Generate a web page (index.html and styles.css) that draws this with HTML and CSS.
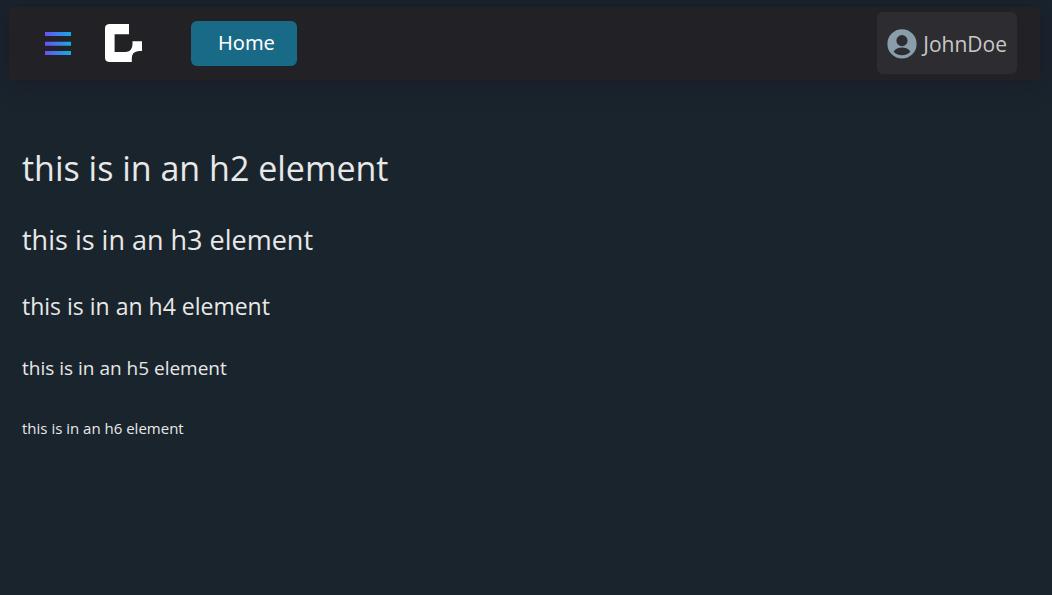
FILE: index.html
```
<!DOCTYPE html>
<html lang="en">
<head>
<meta charset="utf-8">
<meta name="viewport" content="width=device-width, initial-scale=1">
<title>Home</title>
<link rel="stylesheet" href="styles.css">
</head>
<body>
<header class="topbar">
  <button class="menu-button" type="button" aria-label="Menu">
    <svg width="27" height="24" viewBox="0 0 27 24" aria-hidden="true">
      <defs>
        <linearGradient id="bars" gradientUnits="userSpaceOnUse" x1="0" y1="0" x2="27" y2="0">
          <stop offset="0" stop-color="#6a50f5"/>
          <stop offset="1" stop-color="#10b0e0"/>
        </linearGradient>
      </defs>
      <path fill="url(#bars)" d="M0 1h26v4H0zM0 10.700h26v4H0zM0 20h26v4H0z"/>
    </svg>
  </button>
  <svg class="logo" width="38" height="38" viewBox="0 0 38 38" role="img" aria-label="Logo">
    <path fill="#fff" d="M4 0H24V10.300H9.600V28H21Q27.500 27 27.500 20V17.200H37V27H34Q26.800 27.500 26.800 34V38H4Q0 37.500 0 34V4Q0 .5 4 0Z"/>
  </svg>
  <nav class="nav"><a class="nav-link" href="#">Home</a></nav>
  <button class="user" type="button">
    <svg width="30" height="30" viewBox="0 0 30 30" aria-hidden="true">
      <path fill="#8a9dab" fill-rule="evenodd" d="M15 .3a14.600 14.600 0 1 0 0 29.200a14.600 14.600 0 1 0 0-29.200ZM15 6a5.600 5.600 0 1 1 0 11.200A5.600 5.600 0 1 1 15 6ZM6.600 22.400C9 19.500 12 18.600 15 18.600S21 19.500 23.400 22.400C21.500 24.900 18.500 26.200 15 26.200S8.500 24.900 6.600 22.400Z"/>
    </svg>
    <span>JohnDoe</span>
  </button>
</header>
<main class="content">
  <h2 class="heading heading-2">this is in an h2 element</h2>
  <h3 class="heading heading-3">this is in an h3 element</h3>
  <h4 class="heading heading-4">this is in an h4 element</h4>
  <h5 class="heading heading-5">this is in an h5 element</h5>
  <h6 class="heading heading-6">this is in an h6 element</h6>
</main>
</body>
</html>
```
FILE: styles.css
```
* { box-sizing: border-box; }

body {
  margin: 0;
  min-height: 100vh;
  background: #1a242d;
  color: #e8e8e8;
  font-family: "Segoe UI", "Open Sans", "Noto Sans", sans-serif;
}

.topbar {
  display: flex;
  align-items: center;
  margin: 7px 12px 0 9px;
  padding: 5px 23px 6px 36px;
  background: #212126;
  box-shadow: 0 0 20px rgba(24, 24, 36, 0.7);
}

.menu-button {
  display: flex;
  margin-right: 33px;
  padding: 0;
  border: 0;
  background: none;
}

.logo { margin-right: 48px; }

.nav { flex: 1; }

.nav-link {
  display: inline-block;
  padding: 0 22px 2px 27px;
  border-radius: 6px;
  background: #186a86;
  color: #fff;
  font-family: "Noto Sans", sans-serif;
  font-size: 20px;
  line-height: 43px;
  text-decoration: none;
  vertical-align: top;
}

.user {
  display: flex;
  align-items: center;
  gap: 6px;
  height: 62px;
  padding: 2px 10px 0;
  border: 0;
  border-radius: 6px;
  background: #2c2c31;
  color: #c8c8c8;
  font-family: inherit;
  font-size: 21px;
}

.content { padding: 64px 22px; }

.heading {
  margin: 0 0 24px;
  font-weight: 400;
}

.heading-2 { font-size: 34px; line-height: 48px; }
.heading-3 { font-size: 27px; line-height: 48px; }
.heading-4 { font-size: 23px; line-height: 36px; }
.heading-5 { font-size: 19px; line-height: 40px; }
.heading-6 { font-size: 15px; line-height: 32px; }
```
